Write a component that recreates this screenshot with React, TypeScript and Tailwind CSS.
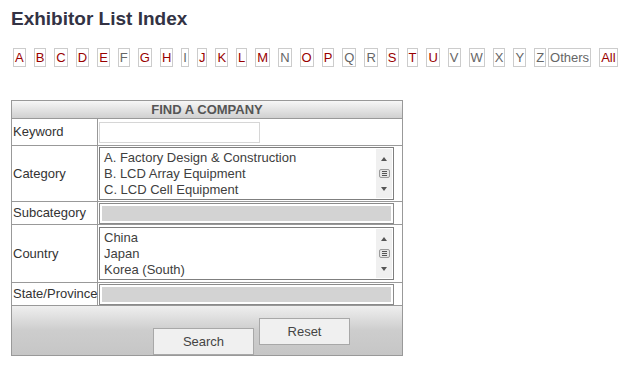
import React from 'react';

const letters: [string, boolean][] = [
  ['A', true], ['B', true], ['C', true], ['D', true], ['E', true], ['F', false], ['G', true],
  ['H', true], ['I', false], ['J', true], ['K', true], ['L', true], ['M', true], ['N', false],
  ['O', true], ['P', true], ['Q', false], ['R', false], ['S', true], ['T', true], ['U', true],
  ['V', false], ['W', false], ['X', false], ['Y', false], ['Z', false], ['Others', false], ['All', true],
];

const ScrollBar: React.FC = () => (
  <div className="my-[1px] mr-[1px] flex w-[16px] flex-col items-center bg-[#f0f0f0]">
    <div className="mt-[8px] h-0 w-0 border-x-[3px] border-b-[4px] border-x-transparent border-b-[#555]" />
    <svg width="11" height="9" viewBox="0 0 11 9" className="mt-[8px]">
      <rect x="0.5" y="0.5" width="10" height="8" rx="1.5" fill="#e6e6e6" stroke="#9a9a9a" />
      <path d="M3 2.5h5M3 4.5h5M3 6.5h5" stroke="#555" strokeWidth="1" />
    </svg>
    <div className="mt-[9px] h-0 w-0 border-x-[3px] border-t-[4px] border-x-transparent border-t-[#555]" />
  </div>
);

const ListBox: React.FC<{ items: string[] }> = ({ items }) => (
  <div className="flex h-[53px] w-[295px] border border-[#7f7f7f] bg-white">
    <div className="flex-1 pl-[4px] pt-[2px] text-[13px] leading-[16px] text-[#404040]">
      {items.map((item) => (
        <div key={item}>{item}</div>
      ))}
    </div>
    <ScrollBar />
  </div>
);

const DisabledSelect: React.FC = () => (
  <div className="h-[21px] w-[295px] border border-[#8a8a8a] bg-white p-[2px]">
    <div className="h-full bg-[#d3d3d3]" />
  </div>
);

const Row: React.FC<{ label: string; height: string; children: React.ReactNode }> = ({ label, height, children }) => (
  <div className={`flex border-b border-[#999999] ${height}`}>
    <div className="flex w-[86px] items-center border-r border-[#999999] pl-[1px] text-[13px] text-[#333333]">
      {label}
    </div>
    <div className="flex flex-1 items-center pl-[1px]">{children}</div>
  </div>
);

export default function App() {
  return (
    <div className="min-h-[374px] w-[630px] bg-white pl-[11px] pt-[8px] font-['Liberation_Sans',Arial,sans-serif]">
      <h1 className="text-[19px] font-bold leading-[22px] text-[#333344]">Exhibitor List Index</h1>

      <div className="ml-[2px] mt-[18px] flex gap-[8px] text-[13px] leading-[15px]">
        {letters.map(([l, active]) => (
          <span
            key={l}
            className={`border border-[#cccccc] p-[1px] ${active ? 'text-[#990000]' : 'text-[#666666]'} ${l === 'Others' ? '-ml-[6px]' : ''}`}
          >
            {l}
          </span>
        ))}
      </div>

      <div className="mt-[33px] w-[392px] border border-[#999999]">
        <div className="h-[18px] border-b border-[#999999] bg-gradient-to-b from-[#f7f7f7] to-[#d0d0d0] text-center text-[13px] font-bold leading-[17px] text-[#555555]">
          FIND A COMPANY
        </div>
        <Row label="Keyword" height="h-[27px]">
          <div className="h-[21px] w-[161px] border border-[#d6d6d6] bg-white" />
        </Row>
        <Row label="Category" height="h-[56px]">
          <ListBox items={['A. Factory Design & Construction', 'B. LCD Array Equipment', 'C. LCD Cell Equipment']} />
        </Row>
        <Row label="Subcategory" height="h-[23px]">
          <DisabledSelect />
        </Row>
        <Row label="Country" height="h-[58px]">
          <ListBox items={['China', 'Japan', 'Korea (South)']} />
        </Row>
        <Row label="State/Province" height="h-[23px]">
          <DisabledSelect />
        </Row>
        <div className="flex h-[49px] items-end gap-[5px] bg-gradient-to-b from-[#efefef] via-[#cdcdcd] to-[#c6c6c6] pl-[141px]">
          <button className="h-[27px] w-[101px] border border-[#a8a8a8] bg-[#f0f0f0] text-[13px] text-[#444444]">
            Search
          </button>
          <button className="mb-[10px] h-[27px] w-[91px] border border-[#a8a8a8] bg-[#f0f0f0] text-[13px] text-[#444444]">
            Reset
          </button>
        </div>
      </div>
    </div>
  );
}
